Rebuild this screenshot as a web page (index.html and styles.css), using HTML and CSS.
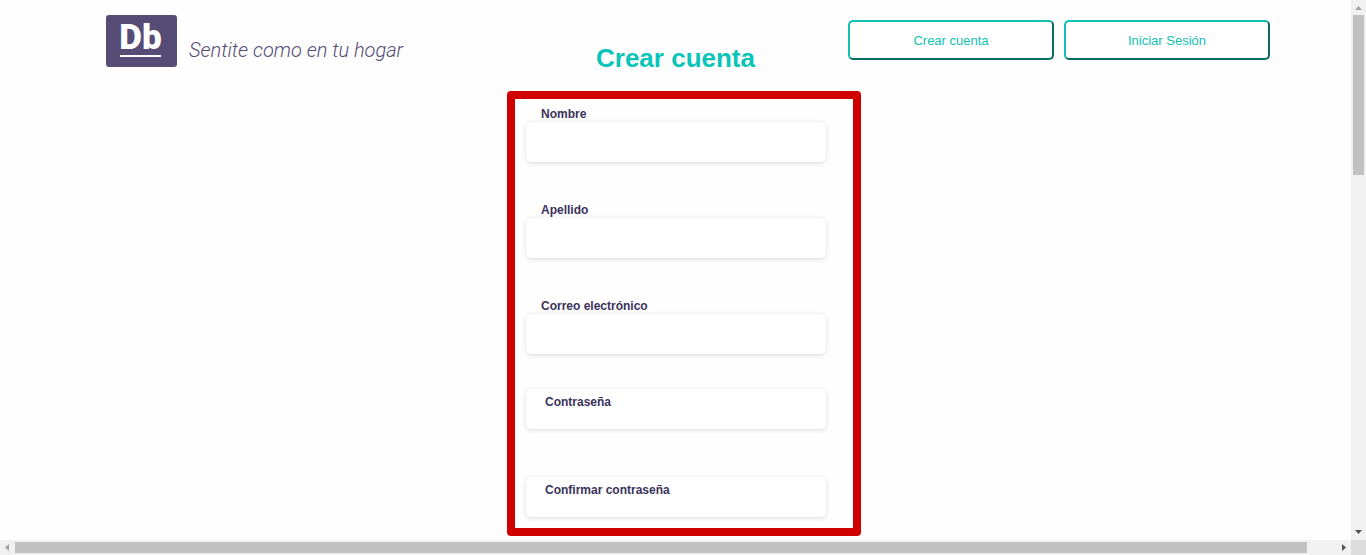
FILE: index.html
```html
<!DOCTYPE html>
<html lang="es">
<head>
<meta charset="utf-8">
<meta name="viewport" content="width=device-width, initial-scale=1">
<title>Crear cuenta</title>
<link rel="stylesheet" href="styles.css">
</head>
<body>
<div class="page">
  <header class="header">
    <a class="brand" href="#">
      <span class="logo">Db</span>
      <span class="tagline">Sentite como en tu hogar</span>
    </a>
    <h1 class="title">Crear cuenta</h1>
    <nav class="actions">
      <button class="button" type="button">Crear cuenta</button>
      <button class="button" type="button">Iniciar Sesión</button>
    </nav>
  </header>
  <main class="main">
    <form class="form">
      <div class="field">
        <label class="label" for="nombre">Nombre</label>
        <input class="input" id="nombre" type="text">
      </div>
      <div class="field">
        <label class="label" for="apellido">Apellido</label>
        <input class="input" id="apellido" type="text">
      </div>
      <div class="field">
        <label class="label" for="correo">Correo electrónico</label>
        <input class="input" id="correo" type="email">
      </div>
      <div class="field field-inset">
        <input class="input" id="clave" type="password">
        <label class="label" for="clave">Contraseña</label>
      </div>
      <div class="field field-inset">
        <input class="input" id="confirmar" type="password">
        <label class="label" for="confirmar">Confirmar contraseña</label>
      </div>
    </form>
  </main>
</div>
<div class="bar bar-vertical" aria-hidden="true">
  <svg class="arrow" viewBox="0 0 15 15"><path d="M4 10 7.5 6 11 10z" fill="#a3a3a3"/></svg>
  <div class="track"><div class="thumb"></div></div>
  <svg class="arrow" viewBox="0 0 15 15"><path d="M4 5 7.5 9 11 5z" fill="#505050"/></svg>
</div>
<div class="bar bar-horizontal" aria-hidden="true">
  <svg class="arrow" viewBox="0 0 15 15"><path d="M9 4 5 7.5 9 11z" fill="#a3a3a3"/></svg>
  <div class="track"><div class="thumb"></div></div>
  <svg class="arrow" viewBox="0 0 15 15"><path d="M6 4 10 7.5 6 11z" fill="#505050"/></svg>
</div>
<div class="corner" aria-hidden="true"></div>
</body>
</html>
```

FILE: styles.css
```css
* {
  box-sizing: border-box;
}

body {
  display: grid;
  grid-template-columns: minmax(0, 1fr) 15px;
  grid-template-rows: minmax(0, 1fr) 15px;
  height: 100vh;
  margin: 0;
  background: #fefefe;
  font-family: "Liberation Sans", Arial, sans-serif;
}

.page {
  overflow: hidden;
}

.header {
  display: grid;
  grid-template-columns: 1fr auto 1fr;
  align-items: start;
  padding: 15px 81px 0;
}

.brand {
  display: flex;
  gap: 12px;
  margin-left: 25px;
  color: #554c77;
  text-decoration: none;
  white-space: nowrap;
}

.logo {
  display: flex;
  flex-direction: column;
  align-items: center;
  width: 71px;
  height: 52px;
  padding: 5px 2px 0 0;
  border-radius: 3px;
  background: #574c75;
  color: #fff;
  font: 900 35px/35px Roboto, sans-serif;
}

.logo::after {
  content: "";
  width: 41px;
  height: 2px;
  background: #fff;
}

.tagline {
  padding-top: 22px;
  font: italic 300 20px/26px Roboto, sans-serif;
}

.title {
  margin: 28px 0 0;
  color: #0bc4b8;
  font-size: 26px;
  line-height: 30px;
}

.actions {
  display: flex;
  justify-content: flex-end;
  gap: 10px;
  padding-top: 5px;
}

.button {
  width: 206px;
  height: 40px;
  padding: 2px 6px 0;
  border: 2px outset #10c1b3;
  border-radius: 5px;
  background: #fff;
  color: #10c1b3;
  font: 13px/16px "Liberation Sans", Arial, sans-serif;
}

.main {
  display: flex;
  justify-content: center;
  padding: 18px 0 0 17px;
}

.form {
  width: 354px;
  padding: 7px 27px 11px 11px;
  border: 8px solid #d10000;
  border-radius: 4px;
}

.field {
  display: grid;
  margin-bottom: 40px;
}

.label {
  padding-left: 15px;
  color: #3c325c;
  font-size: 12px;
  font-weight: bold;
  line-height: 16px;
}

.input {
  width: 100%;
  height: 40px;
  padding: 0 15px;
  border: 0;
  border-radius: 5px;
  background: #fff;
  box-shadow: 0 1px 4px rgba(0, 0, 0, 0.15);
}

.field-inset {
  margin: -5px 0 48px;
}

.field-inset + .field-inset {
  margin: 0;
}

.field-inset .input,
.field-inset .label {
  grid-area: 1 / 1;
}

.field-inset .label {
  z-index: 1;
  align-self: start;
  padding: 5px 0 0 19px;
}

.bar {
  display: flex;
  background: #f1f1f1;
}

.bar-vertical {
  flex-direction: column;
}

.arrow {
  flex: none;
  width: 15px;
  height: 15px;
}

.track {
  flex: 1;
}

.thumb {
  background: #c1c1c1;
}

.bar-vertical .thumb {
  width: 11px;
  height: 160px;
  margin: 0 auto;
}

.bar-horizontal .track {
  padding: 2px 29px 2px 0;
}

.bar-horizontal .thumb {
  height: 11px;
}

.corner {
  background: #dcdcdc;
}
```
